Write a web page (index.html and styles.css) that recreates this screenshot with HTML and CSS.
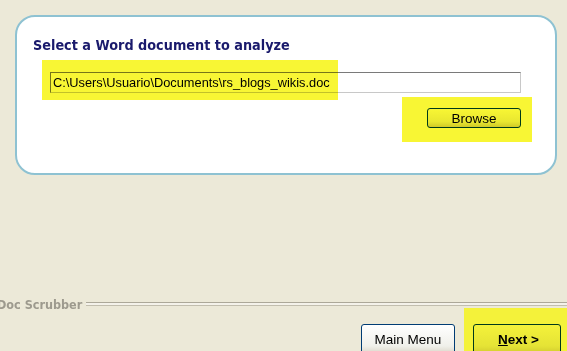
FILE: index.html
```html
<!doctype html>
<html lang="en">
<head>
  <meta charset="UTF-8">
  <title>Doc Scrubber</title>
  <link rel="stylesheet" href="styles.css">
</head>
<body>
  <div class="panel">
    <p class="title">Select a Word document to analyze</p>
    <div class="field">C:\Users\Usuario\Documents\rs_blogs_wikis.doc</div>
    <div class="browse-row">
      <button class="btn">Browse</button>
    </div>
  </div>

  <div class="footer">
    <div class="brand">
      <span class="brand-name">Doc Scrubber</span>
      <span class="rule"></span>
    </div>
    <div class="actions">
      <button class="btn big">Main Menu</button>
      <button class="btn big next"><u>N</u>ext &gt;</button>
    </div>
  </div>

  <!-- marker highlights -->
  <div class="mark mark-path"></div>
  <div class="mark mark-browse"></div>
  <div class="mark mark-next"></div>
</body>
</html>
```

FILE: styles.css
```css
*{
  box-sizing: border-box;
}
body{
  margin: 0;
  width: 567px;
  height: 351px;
  overflow: hidden;
  position: relative;
  background: #ece9d8;
  font-family: "Liberation Sans", Arial, sans-serif;
}
.panel{
  margin: 15px 10px 0 15px;
  height: 160px;
  border: 2px solid #8ec2d2;
  border-radius: 20px;
  background: #fff;
}
.title{
  margin: 19px 0 0 16px;
  font-family: "DejaVu Sans Condensed", "DejaVu Sans", Verdana, sans-serif;
  font-weight: bold;
  font-size: 14.3px;
  line-height: 18px;
  color: #1a1a6c;
}
.field{
  margin: 18px 34px 0 33px;
  height: 21px;
  border: 1px solid #7a7a7a;
  border-right-color: #c8c8c8;
  border-bottom-color: #c8c8c8;
  padding: 0 2px;
  font-size: 12.8px;
  line-height: 19px;
  color: #000;
  background: #fff;
}
.browse-row{
  display: flex;
  justify-content: flex-end;
  margin: 15px 34px 0 0;
}
.btn{
  width: 94px;
  height: 20px;
  padding: 0;
  border: 1px solid #003c74;
  border-radius: 3px;
  background: linear-gradient(#ffffff, #f0f0ea 70%, #d6d0c0);
  font-family: "Liberation Sans", Arial, sans-serif;
  font-size: 13.5px;
  color: #000;
}
.footer{
  margin-top: 121px;
}
.brand{
  display: flex;
  align-items: center;
  margin-left: -3px;
  height: 16px;
}
.brand-name{
  font-family: "DejaVu Sans Condensed", "DejaVu Sans", Verdana, sans-serif;
  font-weight: bold;
  font-size: 12.5px;
  color: #9d9a8e;
}
.rule{
  flex: 1;
  height: 4px;
  margin-left: 4px;
  border-top: 1px solid #aca899;
  border-bottom: 1px solid #c2beae;
  background: #f4f2ea;
}
.actions{
  display: flex;
  justify-content: flex-end;
  gap: 18px;
  margin-top: 12px;
  padding-right: 6px;
}
.big{
  height: 32px;
  padding-bottom: 2px;
}
.next{
  position: relative;
  z-index: 1;
  width: 88px;
  padding-left: 3px;
  font-weight: bold;
  mix-blend-mode: multiply;
}
.mark{
  position: absolute;
  background: #f8f634;
  mix-blend-mode: multiply;
}
.mark-path{
  left: 42px;
  top: 60px;
  width: 296px;
  height: 40px;
}
.mark-browse{
  left: 402px;
  top: 97px;
  width: 130px;
  height: 45px;
}
.mark-next{
  left: 464px;
  top: 308px;
  width: 103px;
  height: 43px;
  background: #f4f23a;
  mix-blend-mode: normal;
}
```
